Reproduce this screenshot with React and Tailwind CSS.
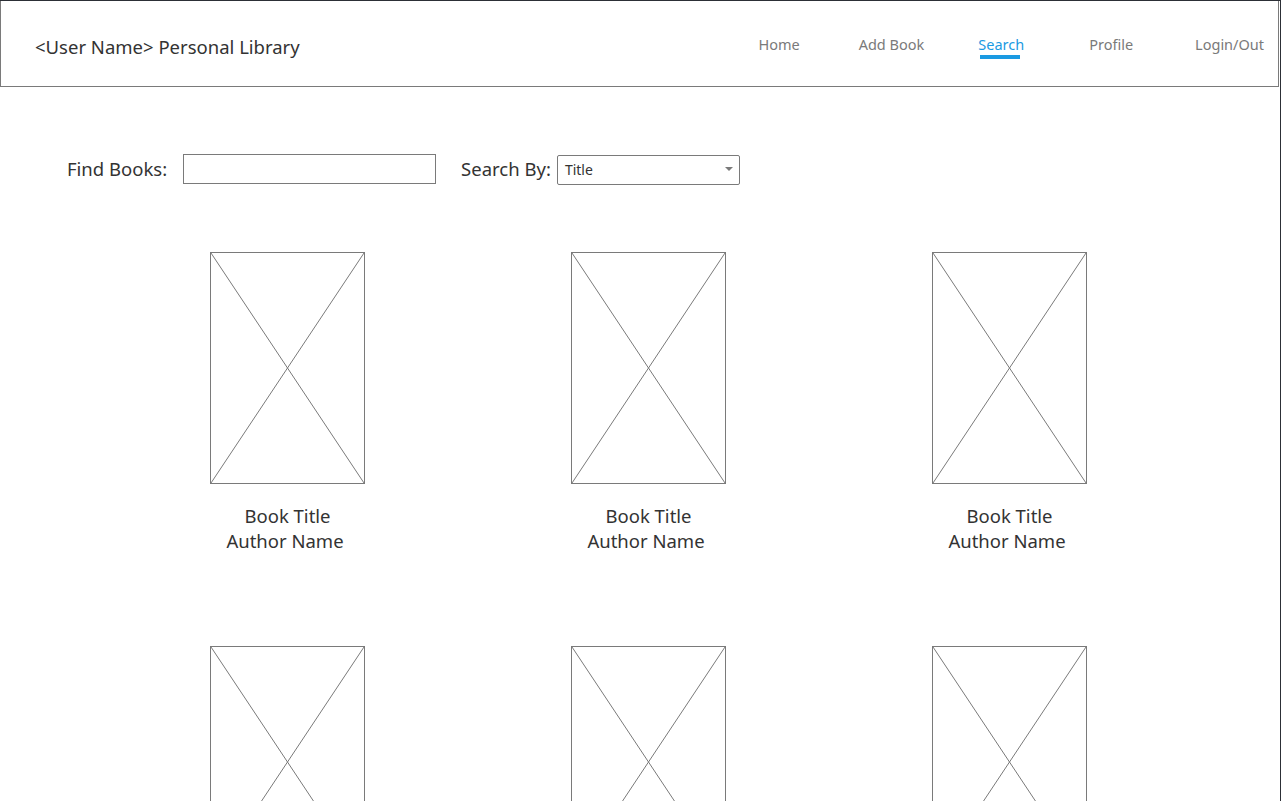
import React from 'react';

const navItems = [
    { label: 'Home', gap: 'ml-0' },
    { label: 'Add Book', gap: 'ml-[59px]' },
    { label: 'Search', gap: 'ml-[54px]' },
    { label: 'Profile', gap: 'ml-[65px]' },
    { label: 'Login/Out', gap: 'ml-[62px]' },
];
const books = [1, 2, 3, 4, 5, 6];

function Placeholder() {
    // wireframe image box with a cross
    return (
        <div className="relative w-[155px] h-[232px] border border-[#7a7a7a] bg-white">
            <svg className="absolute inset-0" width="153" height="230" viewBox="0 0 153 230" preserveAspectRatio="none">
                <line x1="0" y1="0" x2="153" y2="230" stroke="#7a7a7a" strokeWidth="1" />
                <line x1="153" y1="0" x2="0" y2="230" stroke="#7a7a7a" strokeWidth="1" />
            </svg>
        </div>
    );
}

export default function App() {
    return (
        <div className="w-[1281px] h-[801px] overflow-hidden bg-white border-t border-r border-[#2c2f36] font-['Noto_Sans','Open_Sans',sans-serif] text-[#333]">
            {/* Header */}
            <header className="h-[86px] border border-[#7a7a7a] border-t-0 mr-px flex items-start justify-between pl-[34px] pr-[14px]">
                <h1 className="mt-[32px] text-[18.5px] text-[#333]">&lt;User Name&gt; Personal Library</h1>
                <nav className="flex items-start mt-[33px]">
                    {navItems.map((item) => (
                        <div key={item.label} className={`${item.gap} text-[14.5px]`}>
                            {item.label === 'Search' ? (
                                <div className="flex flex-col items-center">
                                    <span className="text-[#1b9ae2]">{item.label}</span>
                                    <span className="block w-[40px] h-[4px] bg-[#1b9ae2] -mt-[1px] -ml-[2px]" />
                                </div>
                            ) : (
                                <span className="text-[#7a7a7a]">{item.label}</span>
                            )}
                        </div>
                    ))}
                </nav>
            </header>

            {/* Search bar */}
            <div className="flex items-center pl-[67px] mt-[66px] h-[31px]">
                <span className="text-[18.5px] text-[#333]">Find Books:</span>
                <div className="ml-[16px] w-[253px] h-[30px] border border-[#7a7a7a] bg-white" />
                <span className="ml-[25px] text-[18.5px] text-[#333]">Search By:</span>
                <div className="ml-[6px] w-[183px] h-[30px] border border-[#7a7a7a] rounded-[2px] bg-white flex items-center justify-between pl-[7px] pr-[6px] mt-[2px]">
                    <span className="text-[14px] text-[#333]">Title</span>
                    <svg width="8" height="5" viewBox="0 0 8 5">
                        <path d="M0 0 L8 0 L4 4 Z" fill="#7a7a7a" />
                    </svg>
                </div>
            </div>

            {/* Book grid */}
            <div className="grid grid-cols-[repeat(3,361px)] gap-y-[93px] pl-[107px] mt-[68px]">
                {books.map((b) => (
                    <div key={b} className="flex flex-col items-center">
                        <Placeholder />
                        <div className="mt-[19px] text-[18.5px] leading-[25px] text-center text-[#333]">
                            <div>Book Title</div>
                            <div className="-ml-[5px]">Author Name</div>
                        </div>
                    </div>
                ))}
            </div>
        </div>
    );
}
